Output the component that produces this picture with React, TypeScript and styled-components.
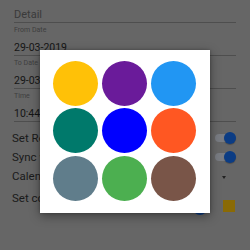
import React from 'react'
import styled, { createGlobalStyle } from 'styled-components'

const GlobalStyle = createGlobalStyle`
  html, body {
    margin: 0;
    padding: 0;
    background: #666666;
    font-family: Roboto, "Liberation Sans", sans-serif;
  }
`

const Screen = styled.div`
  width: 250px;
  height: 250px;
  overflow: hidden;
  background: #666666;
`

const Form = styled.div`
  display: flex;
  flex-direction: column;
  padding: 0 14px;
`

const DetailField = styled.div`
  padding: 7.5px 0 1.5px;
  line-height: 13px;
  font-size: 11px;
  color: #3a3a3a;
  border-bottom: 1px solid #4e4e4e;
`

const Field = styled.div`
  display: flex;
  flex-direction: column;
  padding: 3px 0 1px;
  border-bottom: 1px solid #4e4e4e;
`

const Label = styled.div`
  font-size: 7px;
  line-height: 9px;
  color: #3e3e3e;
  margin-bottom: 6px;
`

const Value = styled.div`
  font-size: 10.5px;
  line-height: 13px;
  color: #151515;
`

const Settings = styled.div`
  display: flex;
  flex-direction: column;
  padding: 6px 15px 0 12px;
`

const Row = styled.div`
  display: flex;
  align-items: center;
  justify-content: space-between;
  height: 19px;
`

const RowText = styled.span`
  font-size: 11.5px;
  line-height: 14px;
  color: #1a1a1a;
`

const ColorRow = styled.div`
  display: flex;
  align-items: flex-start;
  height: 30px;
  padding-top: 5.6px;
  box-sizing: border-box;
`

const Switch = styled.div`
  position: relative;
  width: 20px;
  height: 12px;
  display: flex;
  align-items: center;
`

const Track = styled.div`
  width: 19px;
  height: 8px;
  border-radius: 4px;
  background: #797c82;
`

const Thumb = styled.div`
  position: absolute;
  right: -1px;
  top: 0;
  width: 12px;
  height: 12px;
  border-radius: 50%;
  background: #0b3c84;
  box-shadow: 0 1px 1px rgba(0, 0, 0, 0.25);
`

const Caret = styled.div`
  width: 0;
  height: 0;
  margin-right: 9px;
  margin-top: 4px;
  border-left: 2.5px solid transparent;
  border-right: 2.5px solid transparent;
  border-top: 3px solid #222222;
`

const ColorDot = styled.div`
  margin-left: auto;
  margin-top: 10.4px;
  width: 14px;
  height: 14px;
  border-radius: 50%;
  background: #0b3c84;
`

const Swatch = styled.div`
  margin-left: 16px;
  margin-top: 9.7px;
  width: 12px;
  height: 12px;
  background: #8a6a05;
`

const Overlay = styled.div`
  position: fixed;
  inset: 0;
  display: flex;
  justify-content: center;
  align-items: flex-start;
  padding-top: 50px;
`

const Dialog = styled.div`
  width: 170px;
  box-sizing: border-box;
  padding: 11px 14px 12.4px 13px;
  background: #ffffff;
  box-shadow: 0 3px 10px rgba(0, 0, 0, 0.4), 0 0 3px rgba(0, 0, 0, 0.25);
  display: grid;
  grid-template-columns: repeat(3, 45px);
  column-gap: 4px;
  row-gap: 2.3px;
`

const Circle = styled.button<{ $color: string }>`
  width: 45px;
  height: 45px;
  padding: 0;
  border: none;
  border-radius: 50%;
  background: ${p => p.$color};
`

const colors = [
  '#ffc107', '#6a1b9a', '#2196f3',
  '#00796b', '#0000ff', '#ff5722',
  '#607d8b', '#4caf50', '#795548',
]

const dates = [
  { label: 'From Date', value: '29-03-2019' },
  { label: 'To Date', value: '29-03-2019' },
  { label: 'Time', value: '10:44' },
]

const Toggle = () => (
  <Switch>
    <Track />
    <Thumb />
  </Switch>
)

export default function App() {
  return (
    <>
      <GlobalStyle />
      <Screen>
        <Form>
          <DetailField>Detail</DetailField>
          {dates.map(d => (
            <Field key={d.label}>
              <Label>{d.label}</Label>
              <Value>{d.value}</Value>
            </Field>
          ))}
        </Form>
        <Settings>
          <Row>
            <RowText>Set Reminder</RowText>
            <Toggle />
          </Row>
          <Row>
            <RowText>Sync with calendar</RowText>
            <Toggle />
          </Row>
          <Row>
            <RowText>Calendar</RowText>
            <Caret />
          </Row>
          <ColorRow>
            <RowText>Set color</RowText>
            <ColorDot />
            <Swatch />
          </ColorRow>
        </Settings>
      </Screen>
      <Overlay>
        <Dialog>
          {colors.map(c => (
            <Circle key={c} $color={c} />
          ))}
        </Dialog>
      </Overlay>
    </>
  )
}
